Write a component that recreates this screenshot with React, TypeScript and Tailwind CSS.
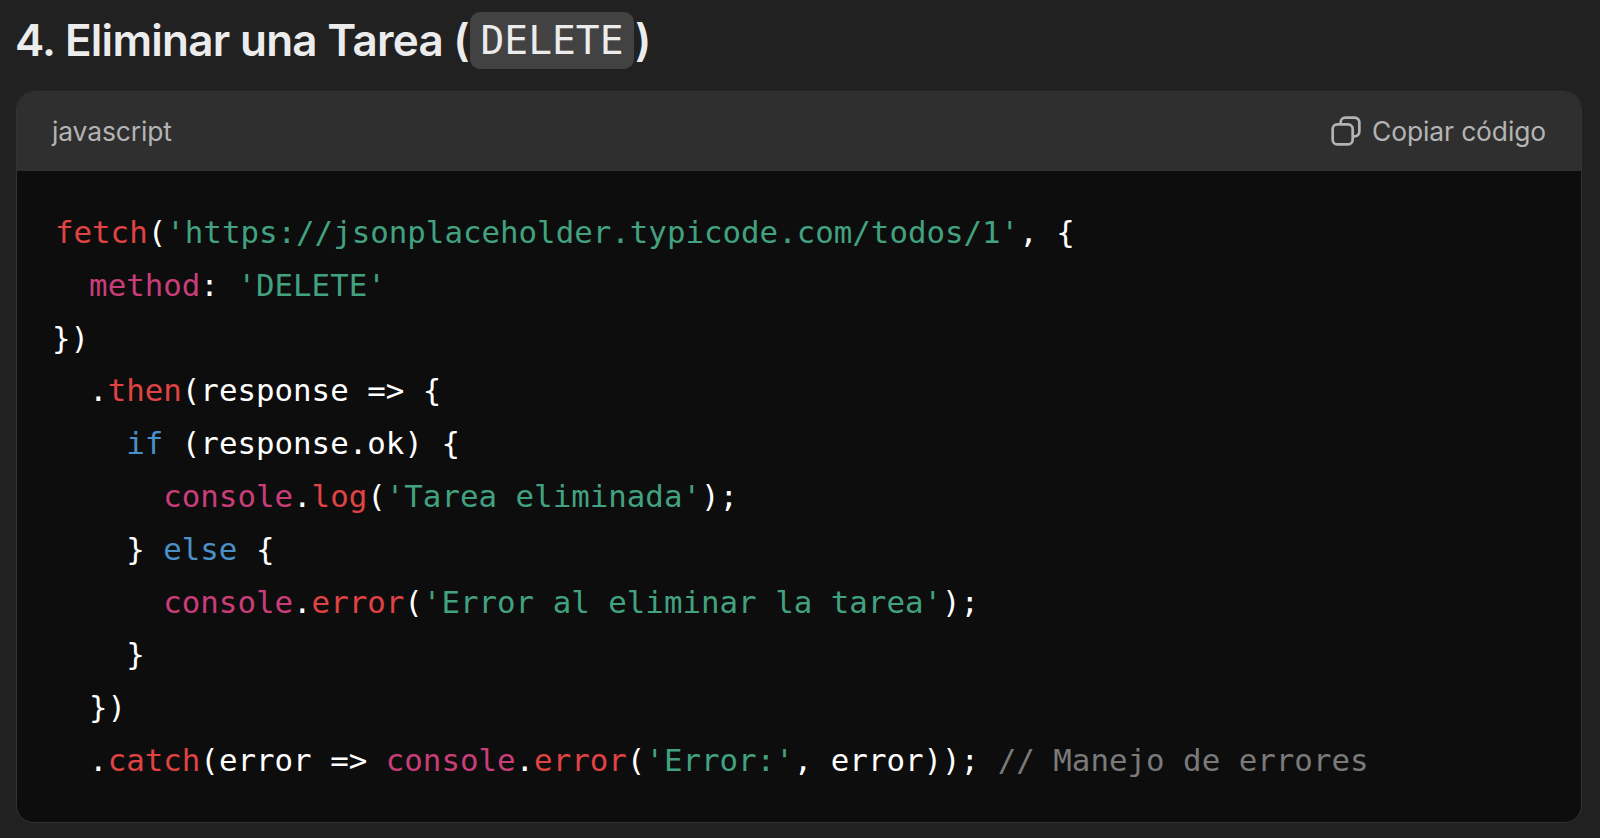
import React from "react";

const R = ({ children }: { children: React.ReactNode }) => <span className="text-[#e04343]">{children}</span>;
const G = ({ children }: { children: React.ReactNode }) => <span className="text-[#42a27f]">{children}</span>;
const P = ({ children }: { children: React.ReactNode }) => <span className="text-[#c93d78]">{children}</span>;
const B = ({ children }: { children: React.ReactNode }) => <span className="text-[#4a90c8]">{children}</span>;
const C = ({ children }: { children: React.ReactNode }) => <span className="text-[#7a7a7a]">{children}</span>;

export default function App() {
  return (
    <div className="h-[838px] w-[1600px] overflow-hidden bg-[#212121] px-4 pt-3 font-['Inter',sans-serif]">
      <h3 className="-ml-[1px] flex h-[57px] items-center text-[44px] leading-[57px] font-semibold tracking-[-0.72px] text-[#ececec]">
        <span>4. Eliminar una Tarea (</span>
        <code className="mx-[1px] rounded-[10px] bg-[#424242] px-[10.5px] font-['DejaVu_Sans_Mono',monospace] text-[39.6px] leading-[57px] font-normal tracking-normal">
          DELETE
        </code>
        <span>)</span>
      </h3>
      <div className="mt-[22px] h-[732px] w-[1566px] overflow-hidden rounded-[17.6px] border border-[#333333] bg-[#0d0d0d]">
        <div className="flex h-[79px] items-center justify-between bg-[#2f2f2f] px-[35px] text-[26.4px] tracking-[-0.1px] text-[#b4b4b4]">
          <span>javascript</span>
          <span className="flex items-center gap-[10px]">
            <svg width="32" height="32" viewBox="0 0 24 24" fill="none" stroke="currentColor" strokeWidth="2">
              <path d="M8 7V5.500A3.500 3.500 0 0 1 11.500 2H18.500A3.500 3.500 0 0 1 22 5.500V12.500A3.500 3.500 0 0 1 18.500 16H17" />
              <rect x="2" y="7" width="15" height="15" rx="3.500" />
            </svg>
            Copiar código
          </span>
        </div>
        <pre className="px-[35px] py-[35px] font-['DejaVu_Sans_Mono',monospace] text-[30.8px] leading-[52.8px] text-white">
          <code className="font-['DejaVu_Sans_Mono',monospace]">
            <span className="ml-[3px]"><R>fetch</R></span>(<G>'https://jsonplaceholder.typicode.com/todos/1'</G>, {"{"}{"\n"}
            {"  "}<P>method</P>: <G>'DELETE'</G>{"\n"}
            {"})"}{"\n"}
            {"  ."}<R>then</R>(response =&gt; {"{"}{"\n"}
            {"    "}<B>if</B> (response.ok) {"{"}{"\n"}
            {"      "}<P>console</P>.<R>log</R>(<G>'Tarea eliminada'</G>);{"\n"}
            {"    } "}<B>else</B> {"{"}{"\n"}
            {"      "}<P>console</P>.<R>error</R>(<G>'Error al eliminar la tarea'</G>);{"\n"}
            {"    }"}{"\n"}
            {"  })"}{"\n"}
            {"  ."}<R>catch</R>(error =&gt; <P>console</P>.<R>error</R>(<G>'Error:'</G>, error)); <C>// Manejo de errores</C>
          </code>
        </pre>
      </div>
    </div>
  );
}
